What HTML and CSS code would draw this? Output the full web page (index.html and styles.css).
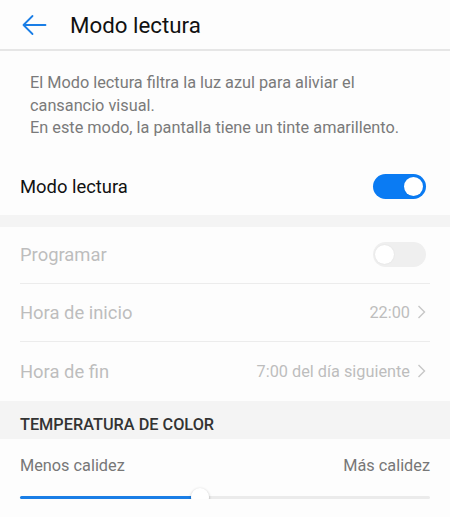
FILE: index.html
```html
<!DOCTYPE html>
<html lang="es">
<head>
	<meta charset="UTF-8">
	<title>Modo lectura</title>
	<link rel="stylesheet" href="styles.css">
</head>
<body>
	<div class="header">
		<svg class="back" width="26" height="22" viewBox="0 0 26 22">
			<path d="M24.5 11H2.5M11.5 2L2.5 11l9 9" fill="none" stroke="#1a7ee6" stroke-width="1.8" stroke-linecap="round" stroke-linejoin="round"/>
		</svg>
		<div class="title">Modo lectura</div>
	</div>

	<div class="desc">
		El Modo lectura filtra la luz azul para aliviar el<br>cansancio visual.<br>En este modo, la pantalla tiene un tinte amarillento.
	</div>

	<div class="row main">
		<span class="label">Modo lectura</span>
		<span class="switch on"><i></i></span>
	</div>

	<div class="band"></div>

	<div class="list">
		<div class="row off r1">
			<span class="label">Programar</span>
			<span class="switch"><i></i></span>
		</div>
		<div class="row off r2">
			<span class="label">Hora de inicio</span>
			<span class="value">22:00 <svg class="chev" width="9" height="14" viewBox="0 0 9 14"><path d="M1.5 1l6 6-6 6" fill="none" stroke="#c6c6c6" stroke-width="1.4"/></svg></span>
		</div>
		<div class="row off r3">
			<span class="label">Hora de fin</span>
			<span class="value">7:00 del día siguiente <svg class="chev" width="9" height="14" viewBox="0 0 9 14"><path d="M1.5 1l6 6-6 6" fill="none" stroke="#c6c6c6" stroke-width="1.4"/></svg></span>
		</div>
	</div>

	<div class="section">TEMPERATURA DE COLOR</div>

	<div class="temp">
		<div class="ends">
			<span>Menos calidez</span>
			<span>Más calidez</span>
		</div>
		<div class="slider">
			<div class="fill" style="width: 44%"></div>
			<div class="knob" style="left: 44%"></div>
		</div>
	</div>
</body>
</html>
```

FILE: styles.css
```css
body{
	margin: 0;
	background: #fdfdfd;
	font-family: Roboto, "Noto Sans", sans-serif;
	color: #111;
}
.header{
	height: 49px;
	display: flex;
	align-items: center;
	border-bottom: 2px solid #e6e6e6;
}
.back{
	margin-left: 21px;
	margin-right: 23px;
}
.title{
	font-size: 22.3px;
	color: #111;
}
.desc{
	padding: 21px 20px 19px 30px;
	font-size: 16.3px;
	line-height: 22.5px;
	color: #7a7a7a;
}
.row{
	display: flex;
	align-items: center;
	justify-content: space-between;
	margin: 0 20px;
}
.row.main{
	height: 56px;
}
.row .label{
	font-size: 18.4px;
}
.row.off{
	border-top: 1px solid #ececec;
}
.row.r1{
	height: 56px;
	border-top: none;
}
.row.r2{
	height: 57px;
}
.row.r3{
	height: 59px;
}
.row.off .label,
.row.off .value{
	color: #bdbdbd;
}
.value{
	font-size: 16.3px;
	display: flex;
	align-items: center;
}
.chev{
	margin: 0 4px 0 7px;
}
.switch{
	width: 53px;
	height: 25px;
	border-radius: 13px;
	background: #efefef;
	position: relative;
	margin-right: 4px;
}
.switch i{
	position: absolute;
	top: 3px;
	left: 2px;
	width: 19px;
	height: 19px;
	border-radius: 50%;
	background: #fff;
	box-shadow: 0 0 2px rgba(0,0,0,0.08);
}
.switch.on{
	background: #0a7bf3;
}
.switch.on i{
	left: auto;
	right: 3px;
}
.band{
	height: 12px;
	background: #f4f4f4;
}
.section{
	height: 32px;
	padding: 6px 0 0 20px;
	line-height: 36px;
	background: #f4f4f4;
	font-size: 16.3px;
	font-weight: 500;
	color: #333;
}
.temp{
	padding: 17px 20px 0;
}
.ends{
	display: flex;
	justify-content: space-between;
	font-size: 16.3px;
	line-height: 20px;
	color: #777;
}
.slider{
	position: relative;
	height: 3px;
	margin-top: 20px;
	background: #ebebeb;
	border-radius: 2px;
}
.fill{
	height: 100%;
	background: #1a7ee6;
	border-radius: 2px;
}
.knob{
	position: absolute;
	top: -8px;
	width: 18px;
	height: 18px;
	margin-left: -9px;
	border-radius: 50%;
	background: #fff;
	box-shadow: 0 1px 3px rgba(0,0,0,0.3);
}
```
